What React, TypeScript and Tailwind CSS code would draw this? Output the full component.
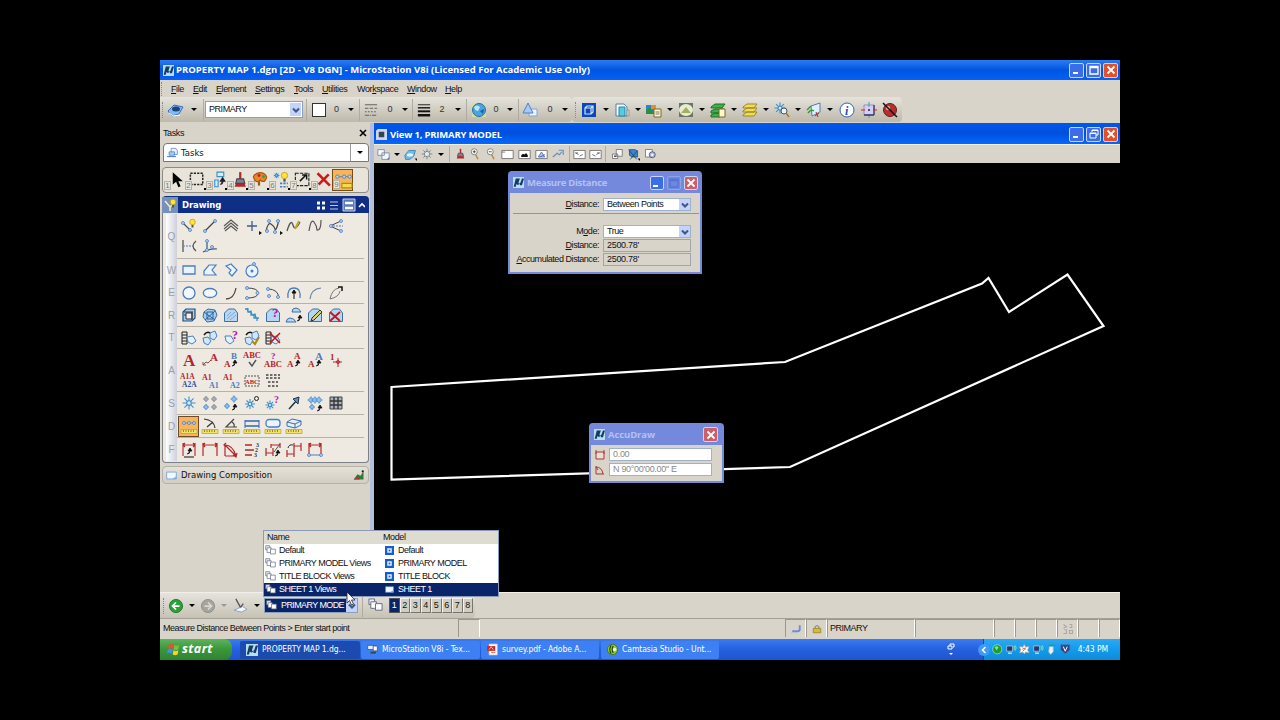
import type { ReactNode } from 'react'

const BLUE = '#4a7ec2'
const RED = '#b3262c'
const INK = '#333333'

const node = (x: number, y: number) => <circle key={`${x}-${y}`} cx={x} cy={y} r="1.5" fill="#b9d3f5" stroke={BLUE} strokeWidth=".8" />

const letter = (t: string, x: number, y: number, size: number, fill = RED) => (
  <text x={x} y={y} fontSize={size} fill={fill} letterSpacing="0" fontFamily="Liberation Serif, serif" fontWeight="bold">{t}</text>
)

const star = (x: number, y: number, r: number, stroke = '#3f8fd0') => (
  <g stroke={stroke} strokeWidth={r > 4 ? 1.1 : 0.9}>
    <path d={`M${x - r} ${y}H${x + r}M${x} ${y - r}V${y + r}M${x - r * 0.7} ${y - r * 0.7}l${r * 1.4} ${r * 1.4}M${x + r * 0.7} ${y - r * 0.7}l${-r * 1.4} ${r * 1.4}`} />
    <circle cx={x} cy={y} r={r * 0.35} fill="#d4ecff" />
  </g>
)

// small blob-like star used in the cell matrix icons
const blob = (x: number, y: number, r: number, fill = '#8fc0ec', stroke = '#4f8dcb') => (
  <g>
    <path d={`M${x - r} ${y}H${x + r}M${x} ${y - r}V${y + r}`} stroke={stroke} strokeWidth="1.2" />
    <circle cx={x} cy={y} r={r * 0.65} fill={fill} stroke={stroke} strokeWidth=".7" />
  </g>
)

const upArrow = (x: number, y: number) => (
  <path d={`M${x} ${y + 5}q3 0 3-3M${x + 1} ${y + 2}l2-3 2 3z`} fill="#111" stroke="#111" strokeWidth=".8" />
)

const ruler = (
  <g>
    <path d="M0 11.5h16v4H0z" fill="#f2e26a" stroke="#b39d2c" strokeWidth=".7" />
    <path d="M2.5 12v2M5 12v2M7.5 12v2M10 12v2M12.5 12v2" stroke="#6e5e10" strokeWidth=".7" />
  </g>
)

const bulb = (x: number, y: number) => (
  <g>
    <circle cx={x} cy={y} r="2.8" fill="#ffe437" stroke="#b79b00" strokeWidth=".7" />
    <path d={`M${x - 1} ${y + 3}h2v2.5h-2z`} fill="#555" />
  </g>
)

const patch = <path d="M1.5 14.5V6l4-4h6l3 4v8.5z" fill="#b7d6f3" stroke="#3d6fa5" />

const cross = <path d="M2 5l10 9M12 5L2 14" stroke="#c5141b" strokeWidth="1.8" />

const icons: Record<string, ReactNode> = {
  // task bar
  pointer: <path d="M6 1v11l3-2.5 2 5 2-1-2-4.5h4z" fill="#000" />,
  fence: <path d="M3 2h11v10H3z" stroke="#222" strokeWidth="1.3" strokeDasharray="2 1" />,
  manipulate: <><path d="M8 1h6v4H8z" fill="#d8ecff" stroke="#3f8fc0" /><path d="M13 8q1 3-2 4M11 9l2-3 2 3z" stroke="#223" fill="#111" /><path d="M6 8h3v6H6z" fill="#d8ecff" stroke="#3f8fc0" /></>,
  brush: <><path d="M9 1h2v6H9z" fill={RED} /><path d="M7 7h6l1 4H6z" fill="#7f8590" stroke="#444" /><path d="M6 11h8l1 3H5z" fill={RED} /></>,
  palette: <><path d="M3 5q3-5 9-3 5 3 1 7-2 1-4-1-2 3-5 0z" fill="#e9882b" stroke="#a45311" /><circle cx="8" cy="4" r="1.3" fill="#b3262c" /><circle cx="12" cy="5" r="1.3" fill="#3f9b3d" /><path d="M8 9v4" stroke="#9b5a20" strokeWidth="2" /></>,
  modify: <>{star(5, 4, 2.5)}{bulb(12, 4)}<path d="M8 11h7M8 14h7" stroke={BLUE} strokeDasharray="2 1" strokeWidth="1.5" /></>,
  scale: <><path d="M3 2h12v11H3z" stroke="#222" strokeDasharray="3 1" /><path d="M7 9l5-5M9 3.500h4v4" stroke="#111" strokeWidth="1.3" /></>,
  remove: <path d="M4 2l11 11M14 3L5 12" stroke="#d01818" strokeWidth="2.2" />,
  measure: <><path d="M3 5h11" stroke="#888" />{node(3, 5)}{node(9, 5)}{node(14, 5)}<path d="M7 11h9v4H7z" fill="#f5dc48" stroke="#a58f1d" /></>,

  // Q
  smartLine: <><path d="M2 5l8 8" stroke="#555" strokeWidth="1.2" />{node(2, 5)}{node(9, 12)}{bulb(11.5, 4)}</>,
  line: <><path d="M3 13L13 3" stroke="#444" strokeWidth="1.2" />{node(3, 13)}{node(13, 3)}</>,
  multiline: <path d="M1 8l7-6 7 6M1 11l7-6 7 6M2 13l6-5 6 5" stroke="#555" strokeWidth="1.1" />,
  point: <><path d="M8 3v10M3 8h10" stroke="#3a5f8a" strokeWidth="1.3" /><path d="M15 13l3 2-3 2z" fill="#111" /></>,
  stream: <><path d="M1 13Q3 4 6 6t4 5 4-9" stroke="#444" strokeWidth="1.2" />{[node(4, 3), node(13, 3), node(2, 13), node(10, 14)]}<path d="M15 13l3 2-3 2z" fill="#111" /></>,
  pointCurve: <><path d="M1 13Q5 0 7 7t7-3" stroke="#555" strokeWidth="1.3" /><path d="M13 3l-4 8" stroke="#c5a62a" strokeWidth="2" /></>,
  curve: <path d="M2 13Q4 0 7 4t3 8q4 1 4-10" stroke="#555" strokeWidth="1.2" />,
  bisector: <><path d="M13 3L2 8l11 5" stroke="#444" /><path d="M2 8h13" stroke={BLUE} strokeDasharray="2 1" />{[node(3, 8), node(13, 3), node(13, 13)]}</>,
  minDist: <><path d="M2 2v12M15 3q-6 5 0 10" stroke="#555" strokeWidth="1.3" /><path d="M2 8h10" stroke={BLUE} strokeDasharray="2 1" /></>,
  angleLine: <><path d="M5 2v11M1 14q8-4 14-3" stroke="#456" strokeWidth="1.2" />{[node(5, 3), node(5, 12), node(10, 9)]}</>,
  // W
  block: <path d="M2 4h12v8H2z" fill="#eaf4ff" stroke={BLUE} strokeWidth="1.3" />,
  shape: <path d="M2 13V9l5-6h7l-4 5 4 5z" fill="#eaf4ff" stroke={BLUE} strokeWidth="1.2" />,
  orthoShape: <path d="M3 4l5-2 6 6-5 6-3-3 2-3z" fill="#eaf4ff" stroke={BLUE} strokeWidth="1.2" />,
  polygon: <><circle cx="8" cy="9" r="6" fill="#eaf4ff" stroke={BLUE} strokeWidth="1.2" /><circle cx="8" cy="9" r="1.5" fill={BLUE} />{node(10, 2)}</>,
  // E
  circle: <circle cx="8" cy="8" r="6" fill="#f1f8ff" stroke={BLUE} strokeWidth="1.3" />,
  ellipse: <ellipse cx="8" cy="8" rx="6.7" ry="4.5" fill="#f1f8ff" stroke={BLUE} strokeWidth="1.3" />,
  arc: <path d="M3 14q8 0 10-11" stroke="#544" strokeWidth="1.3" />,
  halfEllipse: <><path d="M3 3q11 0 11 5t-11 5" stroke="#444" />{[node(3, 3), node(3, 13), node(13.5, 8)]}</>,
  quarter: <><path d="M3 4q10 0 11 9" stroke="#444" />{[node(3, 4), node(13, 12), node(4, 11)]}</>,
  arcRadius: <><path d="M2 13Q1 3 8 3t6 10" stroke={BLUE} strokeWidth="1.3" /><path d="M8 14V7M6 8l2-3 2 3z" stroke="#111" fill="#111" /></>,
  arcAngle: <path d="M3 14Q4 4 14 3" stroke="#667f9e" strokeWidth="1.2" />,
  arcAxis: <><path d="M2 14Q4 4 11 3M2 14q9-2 10-8" stroke="#777" /><path d="M10 2h4v4" stroke="#111" strokeWidth="1.5" /></>,
  // R
  hatch: <><path d="M2 14V5l3-3h9v9l-3 3z" fill="#a8cdef" stroke="#1f4f7f" strokeWidth="1.2" /><path d="M5 12V6h6v6z" fill="#eef" stroke="#333" /><path d="M3 5h9M3 8h2M11 5v8" stroke="#333" /></>,
  crosshatch: <><path d="M2 5l4-3 7 1 2 5-3 6-7 1-4-5z" fill="#a8cdef" stroke="#2f6ea7" /><path d="M5 5h6v7H5zM2 5l11 8M13 4L3 13" stroke="#2b6096" /></>,
  pattern: <>{patch}<path d="M4 12l8-7M4 9l4-4M7 13l6-5" stroke="#7fa9d0" /></>,
  linear: <path d="M1 2h3v3h3v3h3v3h3v3M3 1l1 4 3-1 1 4 3-1 1 4 3 0" stroke="#3b8fc4" strokeWidth="1.3" />,
  showPattern: <>{patch}{letter('?', 7, 10, 13, '#b11bb1')}</>,
  matchPattern: <><path d="M6 5q0-4 4-4 3 0 5 4zM0 15q1-4 4-4 4 0 6 4z" fill="#b7d6f3" stroke="#3d6fa5" />{upArrow(11, 9)}</>,
  changePattern: <>{patch}<path d="M5 11l8-8 2 2-8 8-3 1z" fill="#ded34c" stroke="#333" /></>,
  deletePattern: <>{patch}{cross}</>,
  // T
  tagAttach: <><path d="M1 2h5v12H1zM1 5h5M1 8h5M1 11h5" stroke="#222" /><path d="M6 7l6-1 3 5-4 3-4-2z" fill="#e4f2ff" stroke={BLUE} /></>,
  tagEdit: <><path d="M8 3l5-2 2 5-3 4-4-2zM1 8l5-1 3 4-3 4-4-2z" fill="#cfe6fb" stroke={BLUE} /><path d="M2 5q3-4 6-2" stroke="#111" strokeWidth="1.5" /></>,
  tagReview: <><path d="M2 6l6 0 3 5-4 3-4-3z" fill="#e4f2ff" stroke={BLUE} />{letter('?', 9, 9, 12, '#b11bb1')}</>,
  tagChange: <><path d="M8 3l5-2 2 5-3 4-4-2zM1 8l5-1 3 4-3 4-4-2z" fill="#cfe6fb" stroke={BLUE} /><path d="M8 11l3 3 4-7" stroke="#a88b1b" strokeWidth="2" /><path d="M2 5q3-4 6-2" stroke="#111" strokeWidth="1.5" /></>,
  tagDelete: <><path d="M1 2h5v12H1zM1 5h5M1 8h5M1 11h5" stroke="#222" /><path d="M6 7l6-1 3 5-4 3-4-2z" fill="#e4f2ff" stroke={BLUE} /><path d="M5 3l10 10M15 3L5 13" stroke="#c5141b" strokeWidth="1.5" /></>,
  // A
  text: letter('A', 2, 14, 17),
  note: <><path d="M1 13l3-3 2 1 3-3M1 10v3h3" stroke="#8a4a4a" />{letter('A', 8, 9, 11)}</>,
  textEdit: <>{letter('B', 8, 7, 9, BLUE)}{letter('A', 1, 15, 9)}{upArrow(9, 9)}</>,
  spell: <>{letter('ABC', -1, 6, 8.5)}<path d="M5 10l3 4 4-6" stroke="#555" strokeWidth="1.5" /></>,
  displayText: <>{letter('?', 6, 7, 9, '#b11bb1')}{letter('ABC', -1, 15, 8.5)}</>,
  matchText: <>{letter('A', 8, 7, 9)}{letter('A', 1, 15, 9)}{upArrow(9, 9)}</>,
  changeText: <>{letter('A', 8, 8, 11, BLUE)}{letter('A', 1, 15, 9)}{upArrow(9, 9)}</>,
  textNode: <>{letter('1', 2, 8, 9)}<path d="M10 6v9M5 10h9" stroke={RED} /><circle cx="10" cy="10" r="1.5" stroke={RED} /></>,
  copyInc: <>{letter('A1A', -1, 6, 7.5)}{letter('A2A', 1, 14, 7.5, '#314f94')}</>,
  copyData: <>{letter('A1', 0, 7, 8)}{letter('A1', 7, 15, 8, BLUE)}</>,
  fillData: <>{letter('A1', 0, 7, 8)}{letter('A2', 7, 15, 8, BLUE)}</>,
  autoFill: <><path d="M1 3h14v10H1z" stroke="#555" strokeDasharray="2 1" />{letter('ABC', 1, 11, 6.5)}</>,
  dashes: <path d="M1 2h14M1 5h14M3 9h10M3 13h10" stroke="#444" strokeWidth="1.3" strokeDasharray="2.5 1.5" />,
  // S
  cell: star(8, 8, 6.5),
  cellMatrix: <>{blob(4, 4, 3, '#a9adb2', '#8a8f96')}{blob(12, 4, 3, '#a9adb2', '#8a8f96')}{blob(4, 12, 3)}{blob(12, 12, 3, '#a9adb2', '#8a8f96')}</>,
  cellSelect: <>{blob(11, 4, 3.5)}{blob(4, 11, 3)}{upArrow(9, 10)}</>,
  cellDefine: <>{star(6, 9, 5)}<circle cx="12.5" cy="3.5" r="2" stroke="#222" /></>,
  cellQuery: <>{star(5, 10, 4.5)}{letter('?', 9, 8, 10, '#b11bb1')}</>,
  arrowLine: <><path d="M3 14L12 4" stroke="#234" strokeWidth="1.5" /><path d="M13 2l-1 7-5-5z" fill="#5790cf" stroke="#234" /></>,
  cellReplace: <>{blob(4, 5, 3.5)}{blob(8, 5, 3.5)}{blob(12, 5, 3.5)}{blob(5, 12, 3)}{upArrow(10, 11)}</>,
  grid: <><path d="M2 2h12v12H2z" fill="#aab2bb" stroke="#444" /><path d="M2 6h12M2 10h12M6 2v12M10 2v12" stroke="#333" strokeWidth="1.3" /></>,
  // D
  distance: <><path d="M3 5h11" stroke="#888" />{[node(3, 5), node(8, 5), node(13, 5)]}{ruler}</>,
  radius: <><path d="M2 1q10 1 11 9M5 9l6-5" stroke="#333" strokeWidth="1.2" />{ruler}</>,
  angle: <><path d="M11 1L3 9h11M9 4q3 2 2 5" stroke="#444" strokeWidth="1.2" />{ruler}</>,
  length: <><path d="M1 2v8M15 2v8" stroke="#2f68b9" /><path d="M1 3h14M1 8h14" stroke="#2f68b9" strokeWidth="1.5" />{ruler}</>,
  area: <><rect x="1" y="1.5" width="14" height="7.5" rx="3" fill="#eaf4ff" stroke={BLUE} strokeWidth="1.3" />{ruler}</>,
  volume: <><path d="M1 4l5-3 9 2v4l-6 3-8-2zM1 4l8 2 6-3M9 6v4" fill="#e2f0ff" stroke="#3c6eae" />{ruler}</>,
  // F
  dimElement: <><path d="M2 1v13M14 1v13M2 3h12M4 1L2 3l2 2M12 1l2 2-2 2" stroke={RED} strokeWidth="1.1" /><path d="M3 15h10" stroke="#333" strokeWidth="1.2" />{upArrow(6, 7)}</>,
  dimLinear: <path d="M1 1v13M15 1v13M1 3h14M3 1L1 3l2 2M13 1l2 2-2 2" stroke={RED} strokeWidth="1.2" />,
  dimAngle: <path d="M2 14V3q8 0 11 11H2M2 3l11 11M3 1L1 3l3 2M14 11l-1 4-3-2" stroke={RED} strokeWidth="1.2" />,
  dimOrdinate: <><path d="M1 3h7M1 8h9M1 13h7" stroke={RED} strokeWidth="1.3" />{letter('3', 12, 5, 6, INK)}{letter('2', 11, 10, 6, INK)}{letter('3', 10, 15, 6, INK)}</>,
  dimChange: <><path d="M1 6v8M8 6v8M1 11h7M6 2v4M15 1v5M6 3h9" stroke={RED} strokeWidth="1.2" />{upArrow(10, 9)}<path d="M9 10l6-8" stroke="#555" /></>,
  dimInsert: <><path d="M1 8v7M8 8v7M1 12h7M8 1v8M15 1v8M8 4h7" stroke={RED} strokeWidth="1.2" /><path d="M2 6q1-4 5-3" stroke="#222" /></>,
  dimSize: <><path d="M2 1v12M14 1v12M2 3h12M4 1L2 3l2 2M12 1l2 2-2 2" stroke={RED} strokeWidth="1.2" /><path d="M2 13h12" stroke={BLUE} />{[node(2, 13), node(14, 13)]}</>,

  // attribute and primary tools
  element: <><path d="M0 9l6-6 9 2-4 7-7 2z" fill="#87b9ef" stroke="#3a70b8" /><ellipse cx="8" cy="7" rx="4" ry="2.5" fill="#1d4378" /><path d="M1 11l4 3 7-1" stroke="#fff" /></>,
  globe: <><path d="M1 1h14v14H1z" fill="#d6e0a0" /><circle cx="8" cy="8" r="6.5" fill="#49a5e0" stroke="#2e69a4" /><path d="M3 5q3-3 6 0l-2 4q-3 0-4-4z" fill="#bce8ff" /><path d="M9 9l4-2-1 5z" fill="#1f5ca8" /></>,
  triangle: <><path d="M7 7h8v7H7z" fill="#eaf3ff" stroke="#7ea6da" /><path d="M6 1L1 11h10z" fill="#a9c8f2" stroke="#4f80c8" /></>,
  model: <><path d="M1 1h14v14H1z" fill="#0d45bb" /><path d="M4 6h6v6H4zM4 6l2-2h6v6l-2 2M10 6l2-2" stroke="#cfe3ff" strokeWidth="1.2" /></>,
  reference: <><path d="M2 2h8l3 3v9H2z" fill="#f5fbff" stroke="#57819f" /><path d="M5 5h6v9H5z" fill="#4fd0e0" stroke="#2c8399" /><path d="M13 8h2v6h-2z" fill="#ddd" stroke="#777" strokeWidth=".6" /></>,
  raster: <><path d="M0 3h10v9H0z" fill="#2287d8" /><path d="M0 8l4-3 4 7H0z" fill="#2e8d3b" /><path d="M5 3h5v4H5z" fill="#e88a3a" /><path d="M8 7h7v8H8z" fill="#fff6c9" stroke="#776a2d" /><path d="M9.5 10h4M9.5 12h4" stroke="#777" /></>,
  pointCloud: <><path d="M1 1h14v14H1z" fill="#6c746a" /><ellipse cx="8" cy="8" rx="7" ry="6" fill="#e6eed2" /><path d="M3 11l5-6 5 6z" fill="#a8ab61" /></>,
  levels: <><path d="M1 5l4-3h10l-3 4H1zM1 9l4-2h9l-3 4H1zM1 13l4-2h8l-3 4H1z" fill="#3faf49" stroke="#20702a" /><path d="M9 7h6v8H9z" fill="#fff6c9" stroke="#776a2d" /></>,
  levelDisplay: <path d="M1 5l4-3h10l-3 4H1zM1 9l4-3h10l-3 4H1zM1 13l4-3h10l-3 4H1z" fill="#f1dc58" stroke="#9c8722" />,
  cells: <>{star(6, 6, 5.5)}<circle cx="10" cy="9" r="3" fill="#e4f2ff" stroke="#456" /><path d="M12 11l3 4" stroke="#a97a2b" strokeWidth="1.5" /></>,
  toggles: <><path d="M5 4l9-3v9l-8 4z" fill="#e3eefb" stroke="#4f7fb8" /><path d="M1 8l4-4M2 11q3-4 6-2" stroke="#2f9b40" strokeWidth="1.5" /><path d="M10 10l2 5M9 14l4-3" stroke={RED} /></>,
  info: <><circle cx="8" cy="8" r="7" fill="#fff" stroke="#2f62bc" /><text x="6" y="12.5" fontSize="12" fill="#1b4cb0" fontFamily="Liberation Serif, serif" fontStyle="italic" fontWeight="bold">i</text></>,
  accuSnap: <><path d="M3 3h10v10H3z" fill="#d7cff2" stroke="#8a82a8" strokeWidth=".8" /><path d="M8 0v5M8 12v4" stroke="#3b9ad0" /><path d="M13 3v10M3 13h10" stroke="#333a70" strokeWidth="1.3" /><path d="M0 8h4M12 8h4" stroke="#c5262c" strokeWidth="1.2" /><circle cx="8" cy="8" r="1" fill="#222" /></>,
  stop: <><circle cx="8" cy="8" r="6.5" fill="#b52f2f" stroke="#6d1818" /><circle cx="6" cy="6" r="2.2" fill="#e9a5a0" /><path d="M1 1l14 14" stroke="#111" strokeWidth="1.5" /></>,
  lineStyle: <><path d="M1 2h14" stroke="#555" /><path d="M1 6h14" stroke="#555" strokeDasharray="4 1.5" /><path d="M1 10h14" stroke="#555" strokeDasharray="2 1.5" /><path d="M1 14h14" stroke="#555" strokeDasharray="5 1 1 1" /></>,
  lineWeight: <><path d="M1 2h14" stroke="#111" /><path d="M1 5.5h14" stroke="#111" strokeWidth="1.6" /><path d="M1 9.5h14" stroke="#111" strokeWidth="2.2" /><path d="M1 14h14" stroke="#111" strokeWidth="2.8" /></>,

  // view controls
  views: <><path d="M1 2h8v7H1zM6 6h9v8H6z" fill="#f4f8ff" stroke="#6f84a8" /><path d="M12 14l3-3v3z" fill={BLUE} /></>,
  display: <><path d="M1 9l5-6h8l-2 7-5 4H2z" fill="#6fbce8" stroke="#2f7fb5" /><ellipse cx="7.5" cy="8.5" rx="4" ry="2" fill="#dff2ff" /><path d="M13 13h3v3z" fill="#111" /></>,
  sun: <>{star(8, 8, 7, '#777')}<circle cx="8" cy="8" r="3.5" fill="#dcecf5" stroke="#678" /></>,
  zoomIn: <><circle cx="7" cy="5" r="4" fill="#fff" stroke="#666" /><path d="M5 5h4M7 3v4" stroke="#222" /><path d="M9 9l3 6" stroke="#b58a4a" strokeWidth="2" /></>,
  zoomOut: <><circle cx="7" cy="5" r="4" fill="#fff" stroke="#666" /><path d="M5 5h4" stroke="#222" /><path d="M9 9l3 6" stroke="#b58a4a" strokeWidth="2" /></>,
  windowArea: <path d="M1 3h14v10H1zM1 5h4" fill="#fff" stroke="#666" />,
  fitView: <><path d="M1 3h14v10H1z" fill="#fff" stroke="#666" /><path d="M4 11V9l2-2 2 1 2-2 2 3v2z" fill="#111" /></>,
  rotateView: <><path d="M1 3h14v10H1z" fill="#fff" stroke="#666" /><path d="M4 11l4-6 4 6zM6 11l6-3" fill="#b8cbf0" stroke="#4a5fb0" /></>,
  pan: <path d="M1 12l6-5 3 2 3-4M9 3h6v6" fill="none" stroke="#5c93c5" strokeWidth="1.6" />,
  prev: <><path d="M1 3h14v10H1z" fill="#fff" stroke="#666" /><path d="M3 6l4 2M3 6h3M8 10l4-2" stroke="#555" /></>,
  next: <><path d="M1 3h14v10H1z" fill="#fff" stroke="#666" /><path d="M13 6L9 8M13 6h-3M4 8l4 2" stroke="#555" /></>,
  copyView: <><path d="M7 2h8v9H7zM2 8h7v6H2z" fill="#f7f7f7" stroke="#666" /><path d="M4 10h3v2H4z" fill="#555" /></>,
  clip: <><path d="M3 2h7l3 2v7H6L3 9z" fill="#3d86cc" stroke="#1f4e8a" /><path d="M2 2l10 12M13 3L4 14" stroke="#245" /><path d="M13 13h3v3z" fill="#111" /></>,
  clipMask: <><path d="M2 2h9v10H2z" fill="#fff" stroke="#667" /><circle cx="11" cy="9" r="4" fill="#a9bde6" stroke="#445" /><circle cx="11" cy="9" r="1.5" fill="#fff" /></>,

  // bottom bar and taskbar
  back: <><circle cx="8" cy="8" r="7.5" fill="#2ba13a" stroke="#197227" /><path d="M8 4L4 8l4 4M4 8h8" stroke="#fff" strokeWidth="2" /></>,
  forward: <><circle cx="8" cy="8" r="7.5" fill="#a5a59f" stroke="#8b8b85" /><path d="M8 4l4 4-4 4M12 8H4" stroke="#d8d8d2" strokeWidth="2" /></>,
  draw: <><path d="M1 13l8 2 6-3-5-3z" fill="#f3f7fb" stroke="#8ba3c2" /><path d="M3 1l5 9M8 10l3-4" stroke="#555" strokeWidth="1.4" /></>,
  viewGroup: <><path d="M1 1h6v6H1z" fill="#eef1f6" stroke="#626a80" /><path d="M3 4h6v7H3z" fill="#fff" stroke="#626a80" /><path d="M8 6h7v7H8z" fill="#fff" stroke="#626a80" /></>,
  modelSmall: <><path d="M0 0h16v16H0z" fill="#165ed0" /><path d="M4 4h8v8H4z" fill="#e7f2ff" /><path d="M6.5 6.5h3v3h-3z" fill="#165ed0" /></>,
  sheet: <><path d="M1 3h14v10H1z" fill="#f2f8ff" stroke="#5f92d0" /><path d="M9 13l6-4v4z" fill="#7fb0e6" /></>,
  logo: <><path d="M0 0h16v16H0z" fill="#b6def3" /><path d="M4 2L1 14h3l1-4q3 3 5-1v3h3l3-10h-3l-2 6q-3 3-3 0l2-6z" fill="#153c63" /></>,
  task: <><path d="M6 2h7l2 3v6H6z" fill="#e7f3ff" stroke="#4779bb" /><path d="M3 7h8v5H3z" fill="#a6ccf5" stroke="#4779bb" /><path d="M0 14h13" stroke="#4779bb" strokeWidth="1.5" /></>,
  windows: <><path d="M2 2q3-2 6 0L7 7Q4 5 1 7z" fill="#e8502e" /><path d="M9 2.5q3 2 6 0L14 8q-3 2-6 0z" fill="#76c13a" /><path d="M1 8q3-2 6 0l-1 5q-3-2-6 0z" fill="#3d8ff0" /><path d="M8 9q3 2 6 0l-1 5q-3 2-6 0z" fill="#fbd22b" /></>,
  screens: <><path d="M1 2h9v6H1z" fill="#dff0ff" stroke="#39455e" /><path d="M9 3h6v7H9z" fill="#fff" stroke="#39455e" /><path d="M5 11h8v3H5z" fill="#39455e" /></>,
  pdf: <><path d="M3 0h12v16H3z" fill="#fff" stroke="#bbb" /><path d="M0 3h12v7H0z" fill="#d4271e" /><path d="M3 8l3-4 3 4" stroke="#fff" /><path d="M6 12.5h6" stroke="#d4271e" /></>,
  camtasia: <><circle cx="8" cy="8" r="7.5" fill="#8ec926" stroke="#34610d" /><path d="M6 2q-4 6 0 12M9 3q-3 5 0 10" stroke="#163b07" strokeWidth="1.5" /><circle cx="11" cy="8" r="2.5" fill="#f2ffd5" /></>,
  lock: <><path d="M5 7V4q3-3 6 0v3" stroke="#777" strokeWidth="1.5" /><path d="M2 7h12v7H2z" fill="#d5bd32" stroke="#847215" /></>,
  snap: <><path d="M3 11h7q3 0 3-3V3" stroke="#6d8fd0" strokeWidth="2.5" /><path d="M1 13h9" stroke="#aebfe2" /></>,
  hatchGray: <path d="M2 2l4 3-4 2M10 2h3v4h-3M3 9h3v5H2M10 10h4v4h-4z" stroke="#aaa" strokeWidth="1.4" />,
  net: <><path d="M1 3h9v8H1z" fill="#223a68" stroke="#c6d6ee" /><path d="M3 14h6" stroke="#dde" strokeWidth="2" /><path d="M12 3q2 3 0 6M14 2q3 4 0 8" stroke="#9df09a" strokeWidth="1.2" /></>,
  sphere: <><circle cx="8" cy="8" r="7" fill="#1d9a34" stroke="#bde8c0" /><path d="M4 5q3-3 6 0l-3 5z" fill="#7be889" /></>,
  star: <><path d="M8 1l2 4 5-1-2 5 2 4-5-1-2 3-2-3-5 1 2-4-2-5 5 1z" fill="#fff" stroke="#e9b48c" /><path d="M5 8q3-4 5 0M6 11l4-5" stroke="#e0682a" strokeWidth="1.5" /></>,
  usb: <><path d="M5 4h6v8l-4 4-3-4z" fill="#e8f3ff" stroke="#8fb2cf" /><path d="M4 2h10" stroke="#2fa33f" strokeWidth="2" /></>,
  shield: <><path d="M1 1h14v8l-7 6-7-6z" fill="#2d4788" stroke="#5672b4" /><path d="M5 4l3 7 3-7" stroke="#fff" strokeWidth="1.5" /></>,
  hill: <><path d="M1 14l5-7 4 2 4-6v11z" fill="#2f7d35" /><path d="M1 14l5-5 3 5z" fill="#b33535" /><circle cx="13" cy="3" r="1.5" fill="#222" /></>,
  wand: <><path d="M0 0h16v16H0z" fill="#7790bb" /><path d="M3 4l5 6 5-5M8 10v4" stroke="#eec" strokeWidth="1.5" />{bulb(11, 5)}</>,
}

function Icon({ name, size = 'size-4' }: { name: string; size?: string }) {
  return <svg viewBox="0 0 16 16" fill="none" className={`${size} shrink-0 overflow-visible`}>{icons[name]}</svg>
}

function Tool({ name, w, size }: { name: string; w: string; size?: string }) {
  return <div className={`${w} flex shrink-0 justify-center`}><Icon name={name} size={size} /></div>
}

function Drop({ w, dim }: { w: string; dim?: boolean }) {
  return (
    <div className={`${w} flex shrink-0 justify-center`}>
      <span className={`border-x-[3px] border-t-[3px] border-x-transparent ${dim ? 'border-t-[#999]' : 'border-t-black'}`} />
    </div>
  )
}

function Sep({ w, h = 'h-[22px]' }: { w: string; h?: string }) {
  return <div className={`${w} flex shrink-0 justify-center`}><span className={`${h} w-px bg-[#aeaba0]`} /></div>
}

function Grip({ w }: { w: string }) {
  return <div className={`${w} flex shrink-0 justify-center`}><span className="h-4 border-l border-dotted border-[#8b897f]" /></div>
}

function Num({ w, children }: { w: string; children: ReactNode }) {
  return <div className={`${w} shrink-0 text-center text-[9px] text-[#333]`}>{children}</div>
}

function ComboArrow() {
  return (
    <span className="flex h-full w-[11px] shrink-0 items-center justify-center bg-[#c3d3fb]">
      <svg viewBox="0 0 8 8" className="size-[8px]" fill="none"><path d="M1 2.5l3 3 3-3" stroke="#3e5688" strokeWidth="2" /></svg>
    </span>
  )
}

function WinButton({ kind, big, faded }: { kind: 'min' | 'max' | 'restore' | 'close'; big?: boolean; faded?: boolean }) {
  const bg = kind === 'close' ? (faded ? 'bg-[#cc5f68]' : 'bg-[#e0512a]') : faded && kind === 'max' ? 'bg-[#6c88e0]' : 'bg-[#3a6de6]'
  return (
    <span className={`${bg} ${big ? 'size-[15px]' : 'size-[14px]'} flex items-center justify-center rounded-[2px] border ${faded && kind === 'max' ? 'border-[#8ca4ee]' : 'border-[#c8d6fa]'}`}>
      <svg viewBox="0 0 12 12" className="size-3" fill="none" stroke={faded && kind === 'max' ? '#5874d0' : '#fff'}>
        {kind === 'min' && <path d="M2 9h5" strokeWidth="2" />}
        {kind === 'max' && <path d="M2 2.5h8V10H2zM2 3.5h8" strokeWidth="1.3" />}
        {kind === 'restore' && <path d="M4 4V2h6v5H8M2 5h6v5H2zM2 5.5h6M4 2.5h6" />}
        {kind === 'close' && <path d="M2.5 2.5l7 7M9.5 2.5l-7 7" strokeWidth="1.8" />}
      </svg>
    </span>
  )
}

const menus = [
  ['F', 'ile', 'w-[22px]'], ['E', 'dit', 'w-[23px]'], ['E', 'lement', 'w-[39px]'], ['S', 'ettings', 'w-[39px]'], ['T', 'ools', 'w-7'],
  ['U', 'tilities', 'w-[35px]'], ['Wor', 'kspace', 'w-[50px]'], ['W', 'indow', 'w-[38px]'], ['H', 'elp', 'w-8'],
]

const primaryTools = ['reference', 'raster', 'pointCloud', 'levels', 'levelDisplay', 'cells', 'toggles']

const taskTools = ['pointer', 'fence', 'manipulate', 'brush', 'palette', 'modify', 'scale', 'remove', 'measure']

const drawingRows = [
  { key: 'Q', h: 'h-[45px]', tools: ['smartLine', 'line', 'multiline', 'point', 'stream', 'pointCurve', 'curve', 'bisector', 'minDist', 'angleLine'] },
  { key: 'W', h: 'h-[23px]', tools: ['block', 'shape', 'orthoShape', 'polygon'] },
  { key: 'E', h: 'h-[22px]', tools: ['circle', 'ellipse', 'arc', 'halfEllipse', 'quarter', 'arcRadius', 'arcAngle', 'arcAxis'] },
  { key: 'R', h: 'h-[23px]', tools: ['hatch', 'crosshatch', 'pattern', 'linear', 'showPattern', 'matchPattern', 'changePattern', 'deletePattern'] },
  { key: 'T', h: 'h-[22px]', tools: ['tagAttach', 'tagEdit', 'tagReview', 'tagChange', 'tagDelete'] },
  { key: 'A', h: 'h-[43px]', tools: ['text', 'note', 'textEdit', 'spell', 'displayText', 'matchText', 'changeText', 'textNode', 'copyInc', 'copyData', 'fillData', 'autoFill', 'dashes'] },
  { key: 'S', h: 'h-[23px]', tools: ['cell', 'cellMatrix', 'cellSelect', 'cellDefine', 'cellQuery', 'arrowLine', 'cellReplace', 'grid'] },
  { key: 'D', h: 'h-[23px]', tools: ['distance', 'radius', 'angle', 'length', 'area', 'volume'] },
  { key: 'F', h: 'h-[23px]', tools: ['dimElement', 'dimLinear', 'dimAngle', 'dimOrdinate', 'dimChange', 'dimInsert', 'dimSize'] },
]

const viewGroups = [
  ['Default', 'Default'],
  ['PRIMARY MODEL Views', 'PRIMARY MODEL'],
  ['TITLE BLOCK Views', 'TITLE BLOCK'],
  ['SHEET 1 Views', 'SHEET 1'],
]

function TitleBar() {
  return (
    <div className="flex h-5 items-center bg-linear-to-b from-[#2a7bf5] via-[#0055e0] to-[#0560fa] pr-0.5 pl-[3px]">
      <Icon name="logo" size="size-[11px]" />
      <span className="ml-0.5 flex-1 font-['Open_Sans','Liberation_Sans',sans-serif] text-[9.5px] font-bold tracking-[0.01px] text-white">
        PROPERTY MAP 1.dgn [2D - V8 DGN] - MicroStation V8i (Licensed For Academic Use Only)
      </span>
      <div className="flex gap-0.5"><WinButton kind="min" big /><WinButton kind="max" big /><WinButton kind="close" big /></div>
    </div>
  )
}

function MenuBar() {
  return (
    <div className="flex h-[17px] items-center pt-0.5 text-[9px] tracking-[-0.4px]">
      <Grip w="w-[3px]" />
      <div className="w-2" />
      {menus.map(([a, b, w]) => (
        <span key={a + b} className={`${w} shrink-0`}>
          {a.length > 1 ? <>{a}<u>{b[0]}</u>{b.slice(1)}</> : <><u>{a}</u>{b}</>}
        </span>
      ))}
    </div>
  )
}

function MainToolbar() {
  return (
    <div className="flex h-[26px] pb-px">
      <div className="flex w-[412px] items-center rounded-r bg-linear-to-b from-[#e6e3dc] to-[#bdb9ab]">
        <Grip w="w-[5px]" />
        <Tool name="element" w="w-[22px]" />
        <Drop w="w-[14px]" />
        <Sep w="w-1" />
        <div className="flex h-[17px] w-[98px] shrink-0 items-center border border-[#8aa0bc] bg-white p-px pl-[3px]">
          <span className="flex-1 text-[9px] tracking-[-0.45px]">PRIMARY</span>
          <ComboArrow />
        </div>
        <Sep w="w-[7px]" />
        <div className="flex w-[17px] shrink-0 justify-center"><span className="size-[14px] border border-[#333] bg-white" /></div>
        <Num w="w-[19px]">0</Num>
        <Drop w="w-[10px]" />
        <Sep w="w-[7px]" />
        <Tool name="lineStyle" w="w-4" size="size-[14px]" />
        <Num w="w-[22px]">0</Num>
        <Drop w="w-2" />
        <Sep w="w-[7px]" />
        <Tool name="lineWeight" w="w-[15px]" size="size-[14px]" />
        <Num w="w-[22px]">2</Num>
        <Drop w="w-[9px]" />
        <Sep w="w-2" />
        <Tool name="globe" w="w-[17px]" />
        <Num w="w-[18px]">0</Num>
        <Drop w="w-[10px]" />
        <Sep w="w-1.5" />
        <Tool name="triangle" w="w-[18px]" />
        <Num w="w-[22px]">0</Num>
        <Drop w="w-2" />
      </div>
      <div className="flex w-[330px] items-center rounded bg-linear-to-b from-[#e6e3dc] to-[#bdb9ab]">
        <Grip w="w-1.5" />
        <Tool name="model" w="w-[22px]" />
        <Drop w="w-3" />
        {primaryTools.map(name => (
          <div key={name} className="flex items-center">
            <Tool name={name} w="w-5" />
            <Drop w="w-3" />
          </div>
        ))}
        <Tool name="info" w="w-[22px]" />
        <Tool name="accuSnap" w="w-[21px]" />
        <Tool name="stop" w="w-[22px]" />
      </div>
    </div>
  )
}

function TasksPanel() {
  return (
    <div className="flex w-[214px] shrink-0 flex-col border-r-4 border-[#b5bedb] pr-px">
      <div className="flex h-5 items-center justify-between pr-0.5 pl-[3px] text-[9px] tracking-[-0.4px]">
        Tasks
        <svg viewBox="0 0 8 8" className="size-2"><path d="M1 1l6 6M7 1L1 7" stroke="#000" strokeWidth="1.6" /></svg>
      </div>
      <div className="ml-[3px] flex h-[19px] items-center rounded-t border border-[#777] bg-white pl-[3px]">
        <Icon name="task" size="size-[11px]" />
        <span className="ml-[3px] flex-1 pt-px font-['DejaVu_Sans',sans-serif] text-[8.5px]">Tasks</span>
        <div className="flex h-full w-[18px] items-center justify-center border-l border-[#999]"><Drop w="w-2" /></div>
      </div>

      <div className="mt-[5px] ml-0.5 flex h-[26px] items-center rounded border border-[#8d8b86] bg-[#e8e4da] pl-px">
        {taskTools.map((name, i) => (
          <div key={name} className={`relative flex h-[22px] w-[21px] items-center justify-center ${name === 'measure' ? 'border border-[#7a4b17] bg-[#f6b45c]' : ''}`}>
            <Icon name={name} size="size-[18px]" />
            <span className="absolute bottom-px left-0 h-[9px] w-[7px] border border-[#b5b2a8] bg-[#e9e6dd] text-center text-[8px] leading-[8px] text-[#777]">{i + 1}</span>
            {i > 0 && i < 7 && <span className="absolute right-0 bottom-px size-[2px] bg-black" />}
          </div>
        ))}
      </div>

      <div className="mt-[3px] ml-0.5 flex h-[17px] items-center rounded-t bg-[#0f2f86] pr-1 text-white">
        <Icon name="wand" size="size-4" />
        <span className="ml-1 flex-1 pt-px font-['DejaVu_Sans',sans-serif] text-[8.5px] font-bold tracking-[-0.1px]">Drawing</span>
        <svg viewBox="0 0 50 14" className="h-[14px] w-[50px]" fill="none" stroke="#fff">
          <path d="M2 5h3M7 5h3M2 10h3M7 10h3" strokeWidth="3" />
          <path d="M15 4h8M15 7.5h8M15 11h8" stroke="#b9c9ec" />
          <path d="M28 1h12v12H28z" fill="#5b79bd" stroke="#c5d2ef" />
          <path d="M30 5h8M30 10h8" strokeWidth="2.5" />
          <path d="M44 9l3-3 3 3" strokeWidth="1.6" />
        </svg>
      </div>
      <div className="ml-0.5 rounded-b border border-t-0 border-[#7c8088] bg-[#eeeae1] pt-px pr-1 pb-px pl-[3px]">
        {drawingRows.map(row => (
          <div key={row.key} className={`${row.h} flex`}>
            <span className="flex w-[11px] items-center justify-center bg-linear-to-r from-white to-[#ced0da] text-[10px] text-[#9a9ea8]">{row.key}</span>
            <div className={`flex flex-1 flex-wrap content-center pl-px ${row.key === 'F' ? '' : 'border-b border-[#b5b2a7]'}`}>
              {row.tools.map(name => (
                <div key={name} className={`flex w-[21px] items-center justify-center ${row.key === 'Q' ? 'h-5' : 'h-[21px]'} ${name === 'distance' ? 'border border-[#6b4b2a] bg-[#f6b45c]' : ''}`}>
                  <Icon name={name} size="size-4" />
                </div>
              ))}
            </div>
          </div>
        ))}
      </div>

      <div className="mt-[3px] ml-0.5 flex h-[18px] items-center rounded border border-[#b5b2a7] bg-linear-to-b from-[#e4e1d9] to-[#d2cec2] px-[3px]">
        <Icon name="sheet" size="size-[11px]" />
        <span className="ml-1 flex-1 font-['DejaVu_Sans',sans-serif] text-[8.5px]">Drawing Composition</span>
        <Icon name="hill" size="size-3" />
      </div>
    </div>
  )
}

function MeasureDialog() {
  return (
    <div className="absolute top-2 left-[134px] flex h-[103px] w-[194px] flex-col rounded-t bg-[#7489dc] px-0.5 pb-0.5">
      <div className="flex h-[22px] items-center gap-[3px] pt-px pr-0.5 pl-[3px]">
        <Icon name="logo" size="size-[11px]" />
        <span className="flex-1 font-['Open_Sans',sans-serif] text-[9.5px] font-bold tracking-[-0.3px] text-[#b4c0f3]">Measure Distance</span>
        <WinButton kind="min" faded /><WinButton kind="max" faded /><WinButton kind="close" faded />
      </div>
      <div className="flex flex-1 flex-col bg-[#d8d4c9] pt-[5px] pr-2 pl-[3px] text-[9px] tracking-[-0.45px]">
        <div className="flex h-[13px] items-center">
          <span className="w-[86px] text-right"><u>D</u>istance:</span>
          <div className="ml-1 flex h-[13px] w-[88px] items-center border border-[#9fb1cb] bg-white pl-[3px]"><span className="flex-1">Between Points</span><ComboArrow /></div>
        </div>
        <div className="mt-0.5 mb-[11px] h-px w-[186px] shrink-0 bg-[#98958a]" />
        <div className="flex h-[13px] items-center">
          <span className="w-[86px] text-right">M<u>o</u>de:</span>
          <div className="ml-1 flex h-[13px] w-[88px] items-center border border-[#9fb1cb] bg-white pl-[3px]"><span className="flex-1">True</span><ComboArrow /></div>
        </div>
        <div className="mt-px flex h-[13px] items-center">
          <span className="w-[86px] text-right"><u>D</u>istance:</span>
          <div className="ml-1 flex h-[13px] w-[88px] items-center border border-[#9fa5ab] pl-[3px] tracking-[-0.3px]">2500.78'</div>
        </div>
        <div className="mt-px flex h-[13px] items-center">
          <span className="w-[86px] text-right whitespace-nowrap"><u>A</u>ccumulated Distance:</span>
          <div className="ml-1 flex h-[13px] w-[88px] items-center border border-[#9fa5ab] pl-[3px] tracking-[-0.3px]">2500.78'</div>
        </div>
      </div>
    </div>
  )
}

function AccuDraw() {
  const field = 'flex h-[13px] w-[103px] items-center border border-[#9fb1cb] bg-white pl-[3px] whitespace-nowrap'
  return (
    <div className="absolute top-[260px] left-[215px] flex h-[60px] w-[135px] flex-col rounded-t bg-[#7489dc] px-0.5 pb-0.5">
      <div className="flex h-[22px] items-center gap-[3px] pt-px pr-1 pl-[3px]">
        <Icon name="logo" size="size-[11px]" />
        <span className="flex-1 font-['Open_Sans',sans-serif] text-[9.5px] font-bold tracking-[-0.1px] text-[#b4c0f3]">AccuDraw</span>
        <WinButton kind="close" faded big />
      </div>
      <div className="flex flex-1 flex-col gap-0.5 bg-[#d8d4c9] pt-[3px] pl-1 text-[9px] tracking-[-0.3px] text-[#888]">
        <div className="flex h-[13px] items-center gap-1">
          <svg viewBox="0 0 10 10" className="size-[10px] shrink-0" fill="#eddcd4" stroke="#a03a3a"><path d="M1 2h8v7H1zM1 0v4M9 0v4" /></svg>
          <div className={field}>0.00</div>
        </div>
        <div className="flex h-[13px] items-center gap-1">
          <svg viewBox="0 0 10 10" className="size-[10px] shrink-0" fill="none" stroke="#a03a3a"><path d="M1 1v8h8M1 2q6 0 7 7M1 2l2 3" /></svg>
          <div className={field}>N 90°00'00.00" E</div>
        </div>
      </div>
    </div>
  )
}

function ViewWindow() {
  return (
    <div className="flex flex-1 flex-col">
      <div className="flex h-[21px] shrink-0 items-center bg-linear-to-b from-[#0058ee] via-[#0050dc] to-[#0568ff] pt-px pr-0.5 pl-0.5">
        <svg viewBox="0 0 12 12" className="size-[11px]"><path d="M0 2l2-2h10v12H0z" fill="#ccd9ea" /><path d="M3 3h6v6H3z" fill="#39414f" /></svg>
        <span className="ml-[3px] flex-1 pt-px font-['Open_Sans',sans-serif] text-[9.5px] font-bold tracking-[-0.18px] text-white">View 1, PRIMARY MODEL</span>
        <div className="flex gap-0.5"><WinButton kind="min" big /><WinButton kind="restore" big /><WinButton kind="close" big /></div>
      </div>
      <div className="flex h-[19px] shrink-0 items-center border-t border-[#f1efe8]">
        <Tool name="views" w="w-[18px]" size="size-[13px]" />
        <Drop w="w-[9px]" />
        <Tool name="display" w="w-[18px]" size="size-[13px]" />
        <Tool name="sun" w="w-4" size="size-3" />
        <Drop w="w-3" />
        <Sep w="w-1" h="h-4" />
        <Tool name="brush" w="w-4" size="size-3" />
        <Tool name="zoomIn" w="w-4" size="size-3" />
        <Tool name="zoomOut" w="w-4" size="size-3" />
        <Tool name="windowArea" w="w-[17px]" size="size-[13px]" />
        <Tool name="fitView" w="w-[17px]" size="size-[13px]" />
        <Tool name="rotateView" w="w-4" size="size-[13px]" />
        <Tool name="pan" w="w-[18px]" size="size-3" />
        <Sep w="w-1" h="h-4" />
        <Tool name="prev" w="w-4" size="size-[13px]" />
        <Tool name="next" w="w-4" size="size-[13px]" />
        <Sep w="w-[5px]" h="h-4" />
        <Tool name="copyView" w="w-[17px]" size="size-3" />
        <Tool name="clip" w="w-[17px]" size="size-[13px]" />
        <Tool name="clipMask" w="w-4" size="size-3" />
      </div>
      <div className="relative flex-1 bg-black">
        <svg viewBox="374 163 746 429" className="block h-[429px] w-[746px]">
          <path d="M391.5 387L785 362 982 283.5 988.5 278 1009 312 1067.5 274.5 1103.5 326 790 467 391.5 479.5z" fill="none" stroke="#fff" strokeWidth="2.2" />
        </svg>
        <MeasureDialog />
        <AccuDraw />
      </div>
    </div>
  )
}

function ViewGroupMenu() {
  return (
    <div className="absolute bottom-[-5px] left-[103px] w-[236px] border border-[#8c9bb5] bg-white text-[9px]">
      <div className="flex h-[13px] items-center bg-[#dedbd1] pl-[3px] tracking-[-0.4px]"><span className="w-[116px]">Name</span>Model</div>
      {viewGroups.map(([name, model], i) => (
        <div key={name} className={`flex h-[13px] items-center pl-px tracking-[-0.5px] whitespace-nowrap ${i === 3 ? 'bg-[#0a246a] text-white' : ''}`}>
          <Icon name="viewGroup" size="size-[11px]" />
          <span className="ml-[3px] w-[106px]">{name}</span>
          <Icon name={i === 3 ? 'sheet' : 'modelSmall'} size="size-[9px]" />
          <span className="ml-1 tracking-[-0.5px]">{model}</span>
        </div>
      ))}
      <svg viewBox="0 0 10 15" className="absolute top-[60px] left-[82px] h-[15px] w-[10px]"><path d="M1 1v11l2.5-2.5L5.5 14l2-1-2-4H9z" fill="#fff" stroke="#222" strokeWidth=".8" /></svg>
    </div>
  )
}

function BottomBar() {
  return (
    <div className="flex h-[26px] items-center border-t border-[#f1efe8]">
      <div className="flex h-full w-[315px] items-center rounded-r bg-linear-to-b from-[#e6e3dc] to-[#c6c2b5]">
        <Grip w="w-1.5" />
        <Tool name="back" w="w-5" size="size-[14px]" />
        <Drop w="w-3" />
        <Tool name="forward" w="w-5" size="size-[14px]" />
        <Drop w="w-3" dim />
        <Tool name="draw" w="w-5" size="size-[15px]" />
        <Drop w="w-[14px]" />
        <div className="flex h-[15px] w-[94px] shrink-0 items-center border border-[#8aa0bc] bg-[#0a246a] pl-px text-[9px] whitespace-nowrap text-white">
          <Icon name="viewGroup" size="size-[11px]" />
          <span className="ml-1 flex-1 tracking-[-0.6px]">PRIMARY MODE</span>
          <ComboArrow />
        </div>
        <Sep w="w-2" />
        <Tool name="viewGroup" w="w-[18px]" size="size-[15px]" />
        <div className="ml-[5px] flex">
          {[1, 2, 3, 4, 5, 6, 7, 8].map(n => (
            <span key={n} className={`flex h-[15px] w-[10.5px] items-center justify-center border text-[9px] ${n === 1 ? 'border-[#555] bg-[#0a246a] text-white' : 'border-[#f4f2ec] border-r-[#77756d] border-b-[#77756d] bg-[#d0cdc2]'}`}>{n}</span>
          ))}
        </div>
      </div>
    </div>
  )
}

function StatusBar() {
  const cell = 'flex h-full shrink-0 items-center border-t border-l border-[#9b988d] border-r border-r-white'
  return (
    <div className="flex h-[21px] items-center border-t border-[#a3a095] pb-0.5 text-[9px] tracking-[-0.49px]">
      <span className="w-[298px] pl-[3px]">Measure Distance Between Points &gt; Enter start point</span>
      <div className={`${cell} w-[22px]`} />
      <div className="w-[305px]" />
      <div className={`${cell} w-[21px] justify-center`}><Icon name="snap" size="size-3" /></div>
      <div className={`${cell} w-[21px] justify-center`}><Icon name="lock" size="size-[10px]" /></div>
      <div className={`${cell} w-[88px] pl-0.5`}>PRIMARY</div>
      <div className={`${cell} w-[79px]`} />
      <div className={`${cell} w-[21px]`} />
      <div className={`${cell} w-[21px]`} />
      <div className={`${cell} w-[21px]`} />
      <div className={`${cell} w-[21px] justify-center`}><Icon name="hatchGray" size="size-3" /></div>
      <div className={`${cell} w-[21px]`} />
      <div className={`${cell} w-[21px]`} />
    </div>
  )
}

function Taskbar() {
  const button = 'flex h-[18px] items-center gap-1 rounded-[2px] pl-1.5 whitespace-nowrap'
  return (
    <div className="flex h-[21px] items-center bg-linear-to-b from-[#3b7bf0] via-[#2560e0] to-[#1f55cf] font-['DejaVu_Sans_Condensed','DejaVu_Sans',sans-serif] text-[8.5px] tracking-[-0.07px] text-white">
      <div className="flex h-full w-[72px] items-center gap-0.5 rounded-r-lg bg-linear-to-b from-[#5cb55a] via-[#39963a] to-[#2f8330] pl-[7px]">
        <Icon name="windows" size="size-[13px]" />
        <span className="font-['Open_Sans',sans-serif] text-[12.5px] font-bold tracking-[0.4px] italic">start</span>
      </div>
      <div className={`${button} ml-2 w-[120px] bg-[#1c4bb0]`}><Icon name="logo" size="size-3" />PROPERTY MAP 1.dg...</div>
      <div className={`${button} ml-px w-[119px] bg-[#3d80f3]`}><Icon name="screens" size="size-[11px]" />MicroStation V8i - Tex...</div>
      <div className={`${button} ml-px w-[118px] bg-[#3d80f3]`}><Icon name="pdf" size="size-[11px]" />survey.pdf - Adobe A...</div>
      <div className={`${button} ml-0.5 w-[118px] bg-[#3d80f3]`}><Icon name="camtasia" size="size-[11px]" />Camtasia Studio - Unt...</div>
      <div className="flex flex-1 justify-end pr-7">
        <svg viewBox="0 0 8 14" className="h-[14px] w-2" fill="none" stroke="#fff"><path d="M3 3V1h4v3H6M1 3h4v3H1z" /><path d="M2 10h4l-2 2z" fill="#fff" stroke="none" /></svg>
      </div>
      <div className="flex h-full w-[137px] items-center border-l border-[#0c4fb0] bg-linear-to-b from-[#2aa9f5] via-[#129bec] to-[#108ad8]">
        <span className="-ml-1.5 flex size-3 items-center justify-center rounded-full bg-[#3f9af5]">
          <svg viewBox="0 0 8 8" className="size-2" fill="none"><path d="M5.5 1l-3 3 3 3" stroke="#fff" strokeWidth="1.6" /></svg>
        </span>
        <div className="ml-0.5 flex gap-[3px]">
          {['sphere', 'net', 'star', 'net', 'usb', 'shield'].map((name, i) => <Icon key={i} name={name} size="size-[10.5px]" />)}
        </div>
        <span className="ml-auto pr-3 whitespace-nowrap">4:43 PM</span>
      </div>
    </div>
  )
}

export default function App() {
  return (
    <div className="h-[720px] w-[1280px] overflow-hidden bg-black px-40 py-[60px] font-['Liberation_Sans',Arial,sans-serif] text-[#111]">
      <div className="flex h-[600px] w-[960px] flex-col overflow-hidden bg-[#d8d4c9] leading-none">
        <TitleBar />
        <MenuBar />
        <MainToolbar />
        <div className="relative flex h-[469px] shrink-0">
          <TasksPanel />
          <ViewWindow />
          <ViewGroupMenu />
        </div>
        <BottomBar />
        <StatusBar />
        <Taskbar />
      </div>
    </div>
  )
}
